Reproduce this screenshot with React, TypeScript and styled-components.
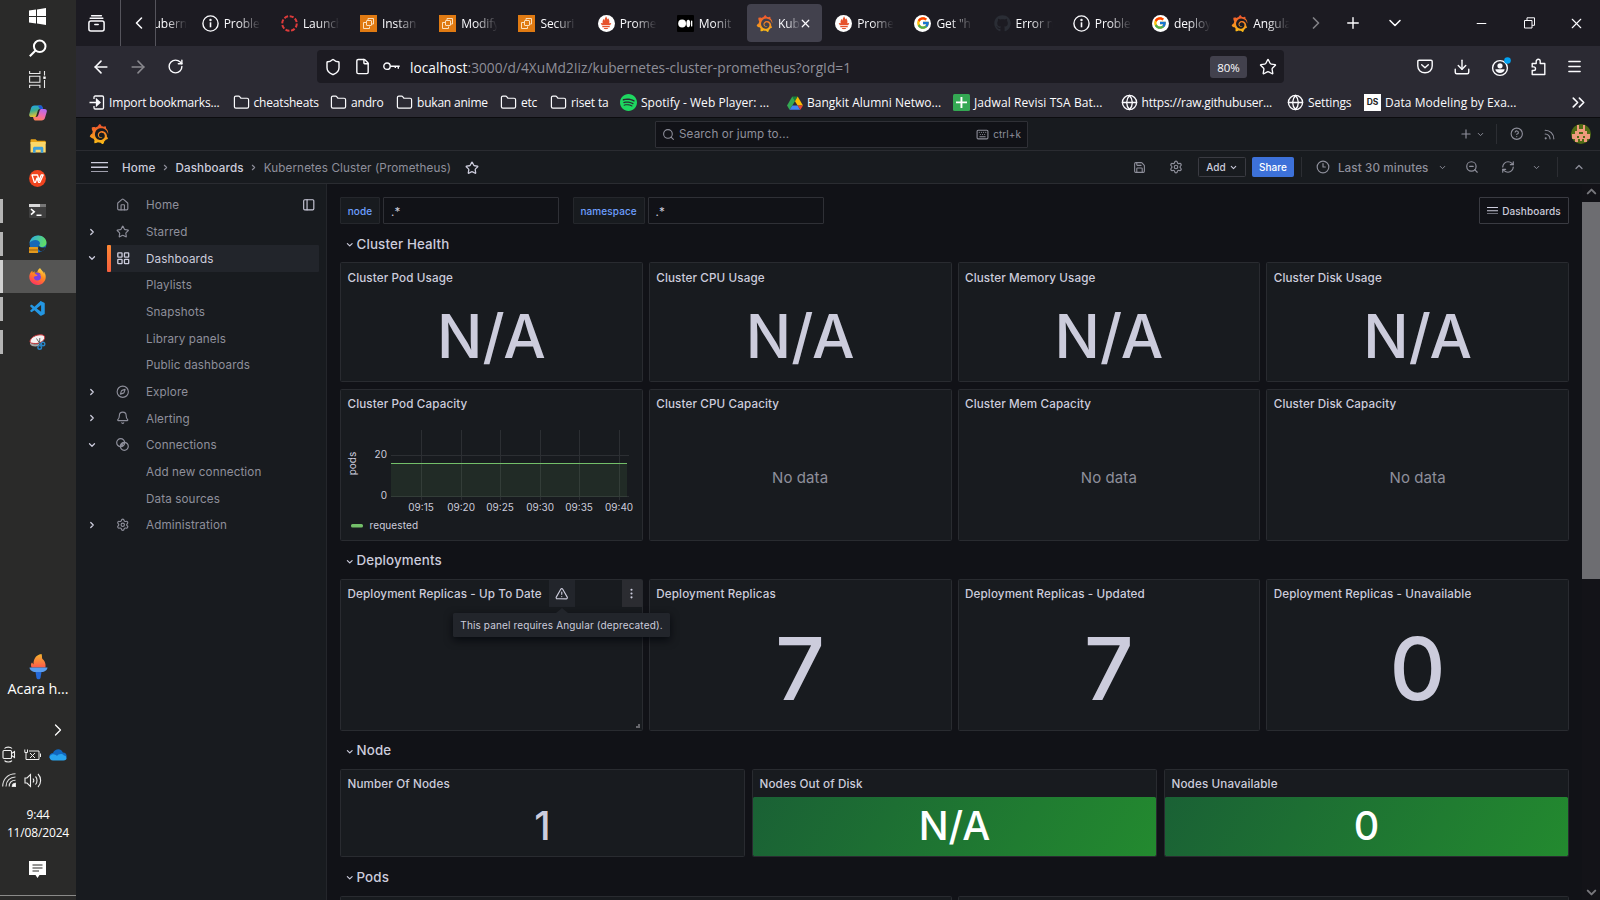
import React from "react";
import styled, { createGlobalStyle, css } from "styled-components";
import {
  ArrowLeft, ArrowRight, RotateCw, Shield, File, Star, Download, Menu, ChevronsRight, ChevronLeft, ChevronRight,
  ChevronDown, ChevronUp, Plus, X, Folder, Globe, Search, Keyboard, Save, Settings, CircleHelp, Rss, Clock3,
  ZoomOut, RefreshCw, House, PanelLeft, LayoutGrid, Compass, Bell, TriangleAlert, EllipsisVertical, Minus,
} from "lucide-react";
import { SiGrafana, SiSpotify, SiFirefoxbrowser } from "react-icons/si";
import { FcGoogle } from "react-icons/fc";
import { FaGithub } from "react-icons/fa";
import { VscVscode } from "react-icons/vsc";

const SEGOE = `"Open Sans", "Noto Sans", sans-serif`;
const INTER = `Inter, "Liberation Sans", sans-serif`;

const Global = createGlobalStyle`
  * { box-sizing: border-box; }
  html, body { margin: 0; padding: 0; background: #111217; overflow: hidden; }
  svg { display: block; flex: none; }
`;

const Screen = styled.div`
  display: flex;
  width: 1600px;
  height: 900px;
  overflow: hidden;
  font-family: ${INTER};
  color: #ccccdc;
`;

/* ---------- Windows taskbar ---------- */

const Taskbar = styled.aside`
  display: flex;
  flex-direction: column;
  flex: none;
  width: 76px;
  height: 900px;
  background: #2a2a29;
  color: #fff;
  font-family: ${SEGOE};
`;

const TaskItem = styled.div<{ $h?: number; $active?: boolean; $running?: boolean; $gap?: number }>`
  position: relative;
  display: flex;
  flex: none;
  align-items: center;
  justify-content: center;
  height: ${(p) => p.$h ?? 32.65}px;
  margin-top: ${(p) => p.$gap ?? 0}px;
  padding-right: 1px;
  background: ${(p) => (p.$active ? "#555554" : "transparent")};
  ${(p) =>
    p.$running &&
    css`
      &::before {
        content: "";
        position: absolute;
        left: 0;
        top: ${p.$active ? 0 : 4.5}px;
        bottom: ${p.$active ? 0 : 4.5}px;
        width: 3px;
        background: ${p.$active ? "#d0d0d0" : "#b4b4b4"};
      }
    `}
`;

const TaskSpacer = styled.div`
  flex: 1;
`;

const Weather = styled.div`
  display: flex;
  flex-direction: column;
  align-items: center;
  height: 62px;
  font-size: 14.4px;
  line-height: 17px;
  letter-spacing: -0.1px;
`;

const TrayChevron = styled.div`
  display: flex;
  justify-content: flex-end;
  height: 26px;
  padding-top: 4px;
  padding-right: 8px;
`;

const TrayRow = styled.div`
  display: flex;
  align-items: center;
  height: 25.5px;
  padding-left: 2px;
  gap: 8px;
`;

const ClockText = styled.div`
  display: flex;
  flex-direction: column;
  align-items: center;
  margin-top: 13px;
  font-size: 12px;
  line-height: 18.6px;
  letter-spacing: -0.15px;
`;

const Notification = styled.div`
  display: flex;
  justify-content: center;
  height: 52px;
  padding-top: 18px;
  padding-right: 1px;
`;

const DesktopPeek = styled.div`
  height: 5px;
  border-top: 1px solid #8a8a89;
`;

/* ---------- Browser chrome ---------- */

const Browser = styled.div`
  display: flex;
  flex-direction: column;
  flex: 1;
  min-width: 0;
  height: 900px;
`;

const TabBar = styled.header`
  display: flex;
  flex: none;
  height: 46px;
  background: #1c1b22;
  color: #fbfbfe;
  font-family: ${SEGOE};
  font-size: 12px;
`;

const Slot = styled.div<{ $w: number; $dim?: boolean; $line?: boolean }>`
  display: flex;
  flex: none;
  align-items: center;
  justify-content: center;
  width: ${(p) => p.$w}px;
  opacity: ${(p) => (p.$dim ? 0.45 : 1)};
  border-right: ${(p) => (p.$line ? "1px solid #55545c" : "0")};
`;

const TabStrip = styled.div`
  display: flex;
  flex: none;
  align-items: center;
  gap: 4.2px;
  width: 1144px;
  overflow: hidden;
`;

const Tab = styled.div<{ $active?: boolean }>`
  display: flex;
  flex: none;
  align-items: center;
  width: 75px;
  height: 37.5px;
  padding: 0 ${(p) => (p.$active ? 10 : 5)}px 0 9px;
  gap: 5px;
  border-radius: 4px;
  background: ${(p) => (p.$active ? "#42414d" : "transparent")};
  letter-spacing: -0.08px;
`;

const TabClose = styled.span`
  display: flex;
  flex: none;
  margin-left: -8px;
`;

const ClippedTab = styled.div`
  flex: none;
  width: 35px;
  margin-left: -2.5px;
`;

const TabLabel = styled.span`
  flex: 1;
  min-width: 0;
  overflow: hidden;
  white-space: nowrap;
  padding-top: 1px;
  line-height: 18px;
  mask-image: linear-gradient(90deg, #000 36%, transparent 94%);
`;

const WindowButtons = styled.div`
  display: flex;
  margin-left: auto;
`;

const NavBar = styled.div`
  display: flex;
  flex: none;
  align-items: center;
  height: 41px;
  padding: 0 0 0 7px;
  background: #2b2a33;
  color: #fbfbfe;
`;

const UrlBar = styled.div`
  display: flex;
  align-items: center;
  width: 967px;
  height: 33px;
  margin-left: 122px;
  padding: 0 7px 0 6px;
  border-radius: 4px;
  background: #1c1b22;
  font-family: ${SEGOE};
  font-size: 13.7px;
`;

const Url = styled.span`
  flex: 1;
  padding: 1.5px 0 0 9px;
  color: #8f8f99;
  letter-spacing: 0.02px;
  white-space: nowrap;
  b {
    font-weight: 400;
    color: #fbfbfe;
  }
`;

const Zoom = styled.span`
  width: 37px;
  height: 22px;
  margin-right: 12px;
  border-radius: 3px;
  background: #42414d;
  font-size: 11.5px;
  line-height: 23px;
  text-align: center;
  letter-spacing: -0.1px;
`;

const NavActions = styled.div`
  display: flex;
  align-items: center;
  margin-left: 122px;
`;

const Bookmarks = styled.div`
  display: flex;
  flex: none;
  align-items: center;
  height: 31px;
  padding-left: 13px;
  border-bottom: 1px solid #0c0c0f;
  background: #2b2a33;
  color: #fbfbfe;
  font-family: ${SEGOE};
  font-size: 12px;
`;

const Bookmark = styled.div<{ $w: number; $ls?: number }>`
  display: flex;
  flex: none;
  align-items: center;
  gap: 4px;
  width: ${(p) => p.$w}px;
  padding-top: 1px;
  letter-spacing: ${(p) => p.$ls ?? -0.14}px;
  white-space: nowrap;
`;

/* ---------- Grafana shell ---------- */

const TopBar = styled.div`
  display: flex;
  flex: none;
  align-items: center;
  height: 33px;
  padding-left: 13px;
  border-bottom: 1px solid #2a2c31;
  background: #181b1f;
  color: #8e8f9b;
`;

const SearchBox = styled.div`
  display: flex;
  align-items: center;
  width: 373px;
  height: 27px;
  margin-left: 546px;
  padding: 0 6px;
  border: 1px solid #2f3036;
  border-radius: 1px;
  background: #111217;
  font-size: 11.67px;
  letter-spacing: 0.12px;
`;

const SearchText = styled.span`
  flex: 1;
  padding: 0 0 0 4px;
`;

const SearchHint = styled.span`
  padding-left: 4px;
  font-size: 10px;
  letter-spacing: 0.05px;
`;

const BarEnd = styled.div`
  display: flex;
  align-items: center;
  margin-left: auto;
`;

const VRule = styled.i`
  width: 1px;
  height: 20px;
  background: #2c2e33;
`;

const SubBar = styled.div`
  display: flex;
  flex: none;
  align-items: center;
  height: 33px;
  padding-left: 14.5px;
  border-bottom: 1px solid #2a2c31;
  background: #181b1f;
  color: #8e8f9b;
  font-size: 11.67px;
`;

const Crumbs = styled.nav`
  display: flex;
  align-items: center;
  padding: 1px 0 0 14.5px;
  letter-spacing: 0.12px;
  white-space: nowrap;
`;

const Crumb = styled.span<{ $muted?: boolean }>`
  color: ${(p) => (p.$muted ? "#8e8f9b" : "#ccccdc")};
  font-weight: ${(p) => (p.$muted ? 400 : 500)};
`;

const TimeRange = styled.span`
  padding-top: 1px;
  font-weight: 500;
  letter-spacing: 0.12px;
  white-space: nowrap;
`;

const Button = styled.div<{ $primary?: boolean; $w: number }>`
  display: flex;
  align-items: center;
  justify-content: center;
  gap: 3px;
  width: ${(p) => p.$w}px;
  height: 20.5px;
  border: 1px solid ${(p) => (p.$primary ? "#3d71d9" : "#3a3b42")};
  border-radius: 1.5px;
  background: ${(p) => (p.$primary ? "#3d71d9" : "transparent")};
  color: ${(p) => (p.$primary ? "#fff" : "#ccccdc")};
  font-size: 10px;
  font-weight: 500;
`;

const Body = styled.div`
  display: flex;
  flex: 1;
  min-height: 0;
`;

const Sidebar = styled.nav`
  flex: none;
  width: 251px;
  padding-top: 7.6px;
  border-right: 1px solid #24262b;
  background: #181b1f;
`;

const NavItem = styled.div<{ $active?: boolean }>`
  display: flex;
  align-items: center;
  height: 26.67px;
  padding-right: 7px;
  color: ${(p) => (p.$active ? "#ccccdc" : "#8e8f9b")};
  font-size: 11.67px;
  letter-spacing: 0.12px;
`;

const Caret = styled.span`
  display: flex;
  width: 31px;
  padding-left: 11px;
  color: #ccccdc;
`;

const NavLink = styled.div<{ $active?: boolean }>`
  position: relative;
  display: flex;
  flex: 1;
  align-items: center;
  height: 100%;
  padding: 0 3.5px 0 8.6px;
  border-radius: 1px;
  background: ${(p) => (p.$active ? "#22252b" : "transparent")};
  ${(p) =>
    p.$active &&
    css`
      &::before {
        content: "";
        position: absolute;
        left: 0;
        top: 0;
        bottom: 0;
        width: 4px;
        border-radius: 1px;
        background: linear-gradient(#ff8833, #f55f3e);
      }
    `}
`;

const NavIcon = styled.span`
  display: flex;
  width: 30.4px;
`;

const NavText = styled.span`
  flex: 1;
  padding-top: 1px;
`;

const Main = styled.main`
  flex: 1;
  min-width: 0;
  padding: 13px 13px 0 13px;
  overflow: hidden;
  background: #111217;
`;

const Variables = styled.div`
  display: flex;
  height: 27px;
  font-size: 10px;
  letter-spacing: 0.1px;
`;

const VarLabel = styled.label<{ $w: number }>`
  width: ${(p) => p.$w}px;
  height: 27px;
  margin-right: 3px;
  border: 1px solid #25272c;
  border-radius: 1px;
  background: #181b1f;
  color: #6e9fff;
  font-weight: 500;
  line-height: 27px;
  text-align: center;
`;

const VarInput = styled.div`
  width: 176px;
  height: 27px;
  margin-right: 13.6px;
  padding-left: 7px;
  border: 1px solid #2f3036;
  border-radius: 1px;
  font-size: 11.67px;
  line-height: 28px;
`;

const DashboardsButton = styled.div`
  display: flex;
  align-items: center;
  justify-content: center;
  gap: 4px;
  width: 90px;
  height: 27px;
  margin-left: auto;
  border: 1px solid #3a3b42;
  border-radius: 1px;
  font-weight: 500;
`;

const RowTitle = styled.h2`
  display: flex;
  align-items: center;
  gap: 2px;
  height: 25px;
  margin: 6.67px 0;
  padding: 1px 0 0 5px;
  font-size: 13.33px;
  font-weight: 500;
  letter-spacing: 0.14px;
  svg {
    margin-top: 2px;
  }
`;

const PanelRow = styled.section<{ $cols: number; $h: number }>`
  display: grid;
  grid-template-columns: repeat(${(p) => p.$cols}, 1fr);
  column-gap: ${(p) => (p.$cols === 3 ? 7 : 6)}px;
  height: ${(p) => p.$h}px;
  margin-bottom: 6.67px;
`;

const PanelBox = styled.article`
  position: relative;
  display: flex;
  flex-direction: column;
  min-width: 0;
  border: 1px solid #292b30;
  border-radius: 1.5px;
  background: #181b1f;
`;

const PanelHead = styled.div`
  display: flex;
  flex: none;
  align-items: center;
  height: 26.67px;
  padding-left: 6.5px;
`;

const PanelTitle = styled.h3`
  margin: 0;
  padding-top: 2px;
  font-size: 11.67px;
  font-weight: 500;
  letter-spacing: 0.12px;
  white-space: nowrap;
`;

const Stat = styled.div<{ $size: number; $green?: boolean }>`
  display: flex;
  flex: 1;
  align-items: center;
  justify-content: center;
  padding-top: ${(p) => (p.$size < 50 ? 1.5 : 0)}px;
  border-radius: 1.5px;
  background: ${(p) => (p.$green ? "linear-gradient(120deg, #1a6135, #238a2f)" : "transparent")};
  color: ${(p) => (p.$green ? "#fff" : "#ccccdc")};
  font-size: ${(p) => p.$size}px;
  font-weight: 500;
  line-height: 1;
`;

const NoData = styled.div`
  display: flex;
  flex: 1;
  align-items: center;
  justify-content: center;
  padding-bottom: 0.5px;
  color: #8e8f9b;
  font-size: 15px;
  letter-spacing: 0.1px;
`;

const HeadButton = styled.div<{ $end?: boolean }>`
  display: flex;
  align-items: center;
  justify-content: center;
  width: ${(p) => (p.$end ? 20 : 26.5)}px;
  height: 26.67px;
  margin-left: ${(p) => (p.$end ? "auto" : "7px")};
  background: ${(p) => (p.$end ? "#2b2c31" : "#22252b")};
`;

const Tooltip = styled.div`
  position: absolute;
  z-index: 2;
  left: 112px;
  top: 33.4px;
  width: 217px;
  height: 24px;
  border-radius: 1.5px;
  background: #22252b;
  box-shadow: 0 3px 8px rgba(1, 4, 9, 0.75);
  font-size: 10px;
  letter-spacing: 0.14px;
  line-height: 25px;
  text-align: center;
  white-space: nowrap;
  &::before {
    content: "";
    position: absolute;
    left: 103px;
    top: -5px;
    border: 6px solid transparent;
    border-top: 0;
    border-bottom: 5px solid #22252b;
  }
`;

const ResizeGrip = styled.i`
  position: absolute;
  right: 2px;
  bottom: 2px;
  width: 4px;
  height: 4px;
  border-right: 2px solid #66676c;
  border-bottom: 2px solid #66676c;
`;

const Scrollbar = styled.div`
  display: flex;
  flex-direction: column;
  align-items: center;
  flex: none;
  width: 18px;
  background: #131318;
  color: #77777c;
`;

const Thumb = styled.div`
  width: 18px;
  height: 377px;
  margin: 3px 0 auto;
  background: #6d6d71;
`;

/* ---------- Drawings ---------- */

const GradientFill = styled.span<{ $id: string }>`
  display: flex;
  flex: none;
  path {
    fill: url(#${(p) => p.$id});
  }
`;

const GrafanaLogo = ({ size }: { size: number }) => (
  <GradientFill $id="grafana-gradient">
    <SiGrafana size={size} />
  </GradientFill>
);

const GradientDefs = styled.svg`
  position: absolute;
`;

const Gradients = () => (
  <GradientDefs width="0" height="0">
    <defs>
      <linearGradient id="grafana-gradient" x1="0" y1="0" x2="0" y2="1">
        <stop offset="0" stopColor="#ee4f2f" />
        <stop offset="1" stopColor="#fbbf16" />
      </linearGradient>
      <linearGradient id="firefox-gradient" x1="0.8" y1="0" x2="0.3" y2="1">
        <stop offset="0" stopColor="#ffe14a" />
        <stop offset="0.45" stopColor="#ff8a1e" />
        <stop offset="1" stopColor="#ff2f63" />
      </linearGradient>
    </defs>
  </GradientDefs>
);

const Bars = ({ w, h, sw = 1.3 }: { w: number; h: number; sw?: number }) => (
  <svg width={w} height={h} viewBox={`0 0 ${w} ${h}`} stroke="#ccccdc" strokeWidth={sw}>
    <path d={`M0 ${sw / 2}h${w}M0 ${h / 2}h${w}M0 ${h - sw / 2}h${w}`} />
  </svg>
);

const InfoIcon = () => (
  <svg width="17" height="17" viewBox="0 0 17 17" fill="none" stroke="#fbfbfe" strokeWidth="1.4">
    <circle cx="8.5" cy="8.5" r="7.6" />
    <path d="M8.5 7.3v5" strokeWidth="1.6" />
    <circle cx="8.5" cy="5" r="0.5" fill="#fbfbfe" />
  </svg>
);

const DashedRing = () => (
  <svg width="17" height="17" viewBox="0 0 17 17" fill="none" stroke="#dd3b3b" strokeWidth="2">
    <circle cx="8.5" cy="8.5" r="7.3" strokeDasharray="4.1 1.63" />
  </svg>
);

const Ec2Icon = () => (
  <svg width="17" height="17" viewBox="0 0 17 17" fill="none" stroke="#fbe0bd" strokeWidth="1">
    <rect width="17" height="17" fill="#e07a12" stroke="none" />
    <rect x="6.5" y="5.5" width="5" height="5" rx="0.5" />
    <path d="M6 7.5H3.5v6h6V11.5M8 5V3.5h5.500V9H12" />
  </svg>
);

const RoundBadge = styled.span`
  display: flex;
  flex: none;
  align-items: center;
  justify-content: center;
  width: 17px;
  height: 17px;
  border-radius: 50%;
  background: #fff;
`;

const PrometheusIcon = () => (
  <RoundBadge>
    <svg width="12" height="14" viewBox="0 0 12 14" fill="#e6522c">
      <path d="M6 0.3C6.8 1.8 7.3 2.2 7.2 3.6 7.9 3.1 8.1 2.6 8 2 9.5 4 9.8 5.6 9.2 7.3L11.3 7 10.2 9.3H1.8L0.7 7l2.1.3C2.2 5.6 2.7 4 3.8 2.7c0 1 .3 1.4.7 1.8C4.4 2.7 5.7 2 6 .3zM2.3 10h7.4v1.3H2.3zM3.7 12h4.6c-.6 1.6-4 1.6-4.600 0z" />
    </svg>
  </RoundBadge>
);

const MediumIcon = () => (
  <svg width="17" height="17" viewBox="0 0 17 17">
    <rect width="17" height="17" rx="1" fill="#000" />
    <circle cx="5.1" cy="8.5" r="3.9" fill="#fff" />
    <ellipse cx="11.3" cy="8.5" rx="1.9" ry="3.7" fill="#fff" />
    <rect x="14" y="5.4" width="1.3" height="6.2" rx="0.6" fill="#fff" />
  </svg>
);

const GoogleIcon = () => (
  <RoundBadge>
    <FcGoogle size={14} />
  </RoundBadge>
);

const DriveIcon = () => (
  <svg width="16" height="14" viewBox="0 0 16 14">
    <path d="M5.3 0.5h5.4L8 5.2z" fill="#188038" />
    <path d="M5.3 .5 0 9.6l2.6 4.2L8 5.2z" fill="#34a853" />
    <path d="M10.7.5 16 9.6h-5.4L8 5.2z" fill="#fbbc04" />
    <path d="M5.4 9.6h5.2l2.6 4.2H2.6z" fill="#4285f4" />
    <path d="M10.6 9.6H16l-2.6 4.2z" fill="#ea4335" />
  </svg>
);

const SheetsIcon = () => (
  <svg width="17" height="17" viewBox="0 0 17 17">
    <rect width="17" height="17" rx="1.5" fill="#34a853" />
    <path d="M7.5 3h1.9v4.6H14v1.7H9.4V14H7.5V9.3H3V7.6h4.5z" fill="#fff" />
  </svg>
);

const DsBadge = styled.span`
  width: 17px;
  height: 17px;
  background: #fff;
  color: #222;
  font: 700 8.5px/17px ${INTER};
  letter-spacing: 0;
  text-align: center;
`;

const ImportIcon = () => (
  <svg width="16" height="15" viewBox="0 0 16 15" fill="none" stroke="#fbfbfe" strokeWidth="1.3">
    <path d="M5 4V2.2C5 1.5 5.5 1 6.2 1h7.1c.7 0 1.2.5 1.2 1.2v10.6c0 .7-.5 1.2-1.2 1.2H6.2C5.5 14 5 13.5 5 12.8V11M.5 7.5h9" />
    <path d="M7.5 4.3 11 7.5l-3.5 3.2z" fill="#fbfbfe" />
  </svg>
);

const FirefoxViewIcon = () => (
  <svg width="17" height="17" viewBox="0 0 17 17" fill="none" stroke="#fbfbfe" strokeWidth="1.5" strokeLinecap="round">
    <path d="M3.6 .8h9.8M2.200 3.300h12.600" />
    <rect x="0.9" y="5.9" width="15.2" height="10.2" rx="2" />
    <path d="M6.8 9.6h3.4" />
  </svg>
);

const KeyIcon = () => (
  <svg width="17" height="9" viewBox="0 0 17 9" fill="none" stroke="#fbfbfe" strokeWidth="1.4">
    <circle cx="4" cy="4.2" r="3.2" />
    <path d="M7.2 4.2h9.5M15.3 4.2v2.5M12.3 4.2v1.8" />
  </svg>
);

const PocketIcon = () => (
  <svg width="16" height="15" viewBox="0 0 16 15" fill="none" stroke="#fbfbfe" strokeWidth="1.4" strokeLinecap="round" strokeLinejoin="round">
    <path d="M2 1.2h12c.7 0 1.2.5 1.2 1.2V7c0 4-3.2 6.8-7.2 6.8S.8 11 .8 7V2.4C.8 1.7 1.3 1.2 2 1.2z" />
    <path d="M4.7 5.7 8 8.8l3.3-3.1" />
  </svg>
);

const AccountIcon = () => (
  <svg width="20" height="20" viewBox="0 0 20 20">
    <circle cx="9" cy="11" r="7.4" fill="none" stroke="#fbfbfe" strokeWidth="1.4" />
    <circle cx="9" cy="8.8" r="2.6" fill="#fbfbfe" />
    <path d="M4.3 12.3h9.4c-.5 2.500-2.300 3.700-4.700 3.700s-4.200-1.200-4.700-3.700z" fill="#fbfbfe" />
    <circle cx="16.5" cy="3.5" r="3.3" fill="#00a2f3" />
  </svg>
);

const ExtensionIcon = () => (
  <svg width="16" height="18" viewBox="0 0 16 18" fill="none" stroke="#fbfbfe" strokeWidth="1.4" strokeLinejoin="round">
    <path d="M1.2 16.5v-4h1.5a1.8 1.8 0 0 0 0-3.6H1.2V5.5h4V3.3a2 2 0 0 1 4 0v2.2h4.6v11z" />
  </svg>
);

const RestoreIcon = () => (
  <svg width="11" height="12" viewBox="0 0 11 12" fill="none" stroke="#fbfbfe" strokeWidth="1">
    <path d="M.5 3.5h7.5v7.5H.5zM3 3.5V.8h7.5v7.5H8" />
  </svg>
);

const Avatar = () => (
  <svg width="20" height="20" viewBox="0 0 20 20">
    <defs>
      <clipPath id="avatar-clip">
        <circle cx="10" cy="10" r="10" />
      </clipPath>
    </defs>
    <g clipPath="url(#avatar-clip)">
      <rect width="20" height="20" fill="#4f6b14" />
      <path
        d="M6 1h2v4h4V1h2v6h2v3h3v5h-3v3h-3v-3h-2v2H9v-2H7v3H4v-3H1v-5h3V7h2zM8 8v2h4V8zM6 12v2h2v-2zM12 12v2h2v-2z"
        fill="#f09a7c"
        fillRule="evenodd"
      />
    </g>
  </svg>
);

const ConnectionsIcon = () => (
  <svg width="13" height="13" viewBox="0 0 13 13" fill="none" stroke="currentColor" strokeWidth="1.2">
    <circle cx="4.7" cy="4.7" r="4" />
    <circle cx="8.3" cy="8.3" r="4" />
    <path d="M4.5 8.2 8 4.5M5.2 6 7 7.9" />
  </svg>
);

const WindowsIcon = () => (
  <svg width="17" height="17" viewBox="0 0 17 17" fill="#fff">
    <path d="M0 2.6 7 1.6V8H0zM8 1.4 17 0v8H8zM0 9h7v6.4L0 14.4zM8 9h9v8l-9-1.4z" />
  </svg>
);

const TaskSearchIcon = () => (
  <svg width="18" height="18" viewBox="0 0 18 18" fill="none" stroke="#fff" strokeWidth="2">
    <circle cx="10.7" cy="7.3" r="5.8" />
    <path d="M6.5 11.5.8 17.2" />
  </svg>
);

const TaskViewIcon = () => (
  <svg width="17" height="17" viewBox="0 0 17 17" fill="none" stroke="#e8e8e8" strokeWidth="1.1">
    <path d="M.6 0v2.5h10.3V0M.6 17v-2.8h10.3V17M.6 5.2h10.3v6H.6zM15.5 0v4.5M15.5 9v8" />
    <rect x="14.3" y="5.5" width="2.4" height="2.4" fill="#fff" stroke="none" />
  </svg>
);

const CopilotIcon = () => (
  <svg width="18" height="16" viewBox="0 0 18 16">
    <defs>
      <linearGradient id="copilot-a" x1="0" y1="0" x2="0.3" y2="1">
        <stop offset="0" stopColor="#1aa5f5" />
        <stop offset="0.5" stopColor="#3fae8e" />
        <stop offset="1" stopColor="#f0c32c" />
      </linearGradient>
      <linearGradient id="copilot-b" x1="0.7" y1="0" x2="0.3" y2="1">
        <stop offset="0" stopColor="#b46bf0" />
        <stop offset="0.5" stopColor="#ef6bb0" />
        <stop offset="1" stopColor="#ff8457" />
      </linearGradient>
    </defs>
    <path d="M5.5.5h6c1 0 1.6.6 1.9 1.5l.6 2H11c-1.3 0-1.9.7-2.3 1.9L7.3 10.5C7 11.5 6.4 12 5.4 12H2.5C.6 12-.2 10.8.3 9l1.7-5.8C2.5 1.5 3.6.5 5.5.5z" fill="url(#copilot-a)" />
    <path d="M9 .5h2.5c1 0 1.6.6 1.9 1.5l.6 2h-3.2z" fill="#1d56d8" />
    <path d="M12.6 4h2.9c1.9 0 2.7 1.2 2.2 3L16 12.8c-.5 1.7-1.6 2.7-3.5 2.7h-6c-1 0-1.6-.6-1.9-1.5L4 12h3c1.3 0 1.9-.7 2.3-1.9l1.4-4.6C11 4.5 11.6 4 12.6 4z" fill="url(#copilot-b)" />
  </svg>
);

const ExplorerIcon = () => (
  <svg width="16" height="14" viewBox="0 0 16 14">
    <path d="M.5 1.5C.5.8 1 .3 1.6.3h4l1.5 1.5h7.8c.5 0 .8.3.8.8V5H.5z" fill="#e8a317" />
    <path d="M.5 3h15.2v10.5H.5z" fill="#fbd769" />
    <path d="M3 13.7V9.3c0-1 .8-1.6 1.7-1.6h6.9c1 0 1.7.7 1.7 1.6v4.4h-2.6v-3H5.6v3z" fill="#3d9fdc" />
  </svg>
);

const WpsIcon = () => (
  <svg width="17" height="17" viewBox="0 0 17 17">
    <circle cx="8.5" cy="8.5" r="8.4" fill="#f0441f" />
    <path d="M3 5h5.5l1.8 5.3L12.2 5h2l-3.3 7.3H9.6L8 8l-1.5 4.3H5.3z" fill="none" stroke="#fff" strokeWidth="1.3" strokeLinejoin="round" />
  </svg>
);

const TerminalIcon = () => (
  <svg width="17" height="14" viewBox="0 0 17 14">
    <rect width="17" height="14" rx="1" fill="#3f3f3f" />
    <path d="M0 0h11v3H0z" fill="#d8d8d8" />
    <path d="M11 0h6v3h-6z" fill="#777" />
    <path d="m2 5 3.2 2.8L2 10.6M7.5 11.3h5" fill="none" stroke="#fff" strokeWidth="1.6" />
  </svg>
);

const EdgeIcon = () => (
  <svg width="18" height="18" viewBox="0 0 18 18">
    <defs>
      <linearGradient id="edge-a" x1="0" y1="0" x2="1" y2="0.3">
        <stop offset="0" stopColor="#2aa9e8" />
        <stop offset="1" stopColor="#5fdc6a" />
      </linearGradient>
    </defs>
    <circle cx="9" cy="9" r="8.5" fill="#1668b8" />
    <path d="M.5 8C1.2 3.5 4.7.5 9.2.5c4.8 0 8.3 3.4 8.3 7.3 0 2.6-1.9 4.2-4.3 4.2-1.6 0-3-.6-3-1.5 0-.7.8-1 .8-2.3C11 6.5 9 5 6.5 5 3.8 5 1.5 6.4.5 8z" fill="url(#edge-a)" />
    <path d="M9.8 10.5c.4 2 3.7 3 7 1.5-1 2.3-3 4-5 4.5L9 14z" fill="#2a2a29" />
    <rect x="0" y="12" width="9" height="6" rx="0.5" fill="#e39a1f" />
    <path d="M0 15h9" stroke="#9a5f0c" />
  </svg>
);

const FirefoxIcon = () => (
  <svg width="17" height="17" viewBox="0 0 24 24">
    <circle cx="11.5" cy="13" r="6.5" fill="#7a3fe0" />
    <GradientFill as="g" $id="firefox-gradient">
      <SiFirefoxbrowser size={24} />
    </GradientFill>
  </svg>
);

const SnipIcon = () => (
  <svg width="17" height="16" viewBox="0 0 17 16">
    <path d="M1 8c2 2.5 6 3 9.500 1.500l-1 2.500c-3 1-7.500.5-8.500-2z" fill="#a9a5a5" />
    <path d="M1 8C1 3.500 7 .6 12 .8c3 .1 4.200 1.500 3.500 3.700-1 3-5 5-9 5C3.500 9.500 1.200 9 1 8z" fill="#f6f2f2" stroke="#c9373c" strokeWidth="1" />
    <path d="M7.500 4.500 11 9.800M10.8 4 10.500 9.800" stroke="#555" strokeWidth="0.9" />
    <circle cx="14" cy="10" r="1.8" fill="none" stroke="#2a86c8" strokeWidth="1.4" />
    <circle cx="10.7" cy="13.4" r="1.8" fill="none" stroke="#2a86c8" strokeWidth="1.4" />
    <path d="m10 9.500 2.500 1.200-1 1.500" fill="none" stroke="#2a86c8" strokeWidth="1.4" />
  </svg>
);

const TorchIcon = () => (
  <svg width="19" height="26" viewBox="0 0 19 26">
    <defs>
      <linearGradient id="torch-flame" x1="0.5" y1="0" x2="0.5" y2="1">
        <stop offset="0" stopColor="#f7b42c" />
        <stop offset="1" stopColor="#fb5a4b" />
      </linearGradient>
    </defs>
    <path d="M12.5 0c1 3 0 4 1.5 5.5s3 3.5 2.5 8H2.5C1.5 11 2 9.5 3 8.5l1.5 2C4.5 6 6 1 12.5 0z" fill="url(#torch-flame)" />
    <path d="M.5 13.5h18c0 2.5-2 3.5-4.5 4.5H5C2.5 17 .5 16 .5 13.5z" fill="#5a9df0" />
    <path d="M6.5 18h6l-1 6c-.5 1.7-3.5 1.7-4 0z" fill="#2468d8" />
  </svg>
);

const MeetIcon = () => (
  <svg width="14" height="17" viewBox="0 0 14 17" fill="none" stroke="#eee" strokeWidth="1.1">
    <rect x="1" y="4.5" width="8.5" height="8" rx="1" />
    <path d="m9.5 7.5 3-2v6l-3-2M2.5 2.5C4 .6 8.5.6 10 2.5M2.5 14.7c1.5 1.8 6 1.8 7.5 0" />
  </svg>
);

const BatteryIcon = () => (
  <svg width="17" height="12" viewBox="0 0 17 12" fill="none" stroke="#eee" strokeWidth="1">
    <path d="M5 2h10v8.5H2V7M16.5 4.5v3.5M6 4l5 5M11 4 6 9M.8.5v3h2.7v-3M2 3.5V7" />
  </svg>
);

const OneDriveIcon = () => (
  <svg width="18" height="12" viewBox="0 0 18 12">
    <path d="M4 4C6-.5 12-1 13.8 3.5 17 3.5 18 6 17.5 8L9 8 0.5 9C-.5 6 2 4 4 4z" fill="#1068c0" />
    <path d="M4 11.5C0 11.5-.5 6.5 3 5.5c2-.5 4 .5 5 1.500 1-2 5-3 7-.5 3 0 4 5-.5 5z" fill="#28a4ee" />
  </svg>
);

const WifiIcon = () => (
  <svg width="14" height="14" viewBox="0 0 14 14" fill="none" stroke="#ddd" strokeWidth="1.1">
    <path d="M.7 13.5C.7 6 6 .7 13.5.7M4 13.5C4 8 8 4 13.5 4M7.2 13.5c0-4 2.6-6.3 6.3-6.3" />
    <path d="M10.3 13.5c0-2 1.2-3.2 3.2-3.2v3.2z" fill="#fff" />
  </svg>
);

const VolumeIcon = () => (
  <svg width="18" height="15" viewBox="0 0 18 15" fill="none" stroke="#eee" strokeWidth="1.1">
    <path d="M1 5h2l3.5-3.5v12L3 10H1zM9 5.5c.8 1 .8 3 0 4M11.5 3.5c2 2 2 6 0 8M14 1c3.5 3.5 3.5 9.5 0 13" />
  </svg>
);

const NoteIcon = () => (
  <svg width="17" height="17" viewBox="0 0 17 17">
    <path d="M0 0h17v14h-6.5l-2 3-2-3H0z" fill="#fff" />
    <path d="M3.5 4h10M3.5 7h10M3.5 10h6.5" stroke="#2a2a29" strokeWidth="1.1" />
  </svg>
);

const HOURS = [
  { x: 80.5, label: "09:15" },
  { x: 120.5, label: "09:20" },
  { x: 159.5, label: "09:25" },
  { x: 199.5, label: "09:30" },
  { x: 238.5, label: "09:35" },
  { x: 278.5, label: "09:40" },
];

const ChartText = styled.text`
  fill: #ccccdc;
  font-family: ${INTER};
  font-size: 10px;
`;

const PodChart = () => (
  <svg width="300" height="123" viewBox="0 0 300 123">
    {HOURS.map((h) => (
      <g key={h.label}>
        <path d={`M${h.x} 13v70`} stroke="#2c2f33" />
        <ChartText x={h.x - 0.4} y="94.4" textAnchor="middle">
          {h.label}
        </ChartText>
      </g>
    ))}
    <path d="M50 38.5h238M50 79.5h238" stroke="#2c2f33" />
    <rect x="50" y="47" width="236" height="33" fill="#73bf69" fillOpacity="0.1" />
    <path d="M50 46.5h236" stroke="#73bf69" strokeWidth="1" />
    <ChartText x="46" y="41.3" textAnchor="end">20</ChartText>
    <ChartText x="46" y="81.6" textAnchor="end">0</ChartText>
    <ChartText transform="translate(14.7 46.5) rotate(-90)" textAnchor="middle">pods</ChartText>
    <rect x="10" y="107" width="12" height="3.4" rx="1.5" fill="#73bf69" />
    <ChartText x="28.5" y="112.4" letterSpacing="0.1">requested</ChartText>
  </svg>
);

/* ---------- Content ---------- */

const TABS: { label: string; icon: React.ReactNode; active?: boolean }[] = [
  { label: "Proble", icon: <InfoIcon /> },
  { label: "Launch", icon: <DashedRing /> },
  { label: "Instan", icon: <Ec2Icon /> },
  { label: "Modify", icon: <Ec2Icon /> },
  { label: "Securi", icon: <Ec2Icon /> },
  { label: "Prome", icon: <PrometheusIcon /> },
  { label: "Monit", icon: <MediumIcon /> },
  { label: "Kub", icon: <GrafanaLogo size={17} />, active: true },
  { label: "Prome", icon: <PrometheusIcon /> },
  { label: 'Get "h', icon: <GoogleIcon /> },
  { label: "Error n", icon: <FaGithub size={17} color="#2a2d35" /> },
  { label: "Proble", icon: <InfoIcon /> },
  { label: "deploy", icon: <GoogleIcon /> },
  { label: "Angula", icon: <GrafanaLogo size={17} /> },
];

const folder = <Folder size={17} strokeWidth={1.7} />;
const globe = <Globe size={17} strokeWidth={1.9} />;

const BOOKMARKS: { label: string; icon: React.ReactNode; w: number; ls?: number }[] = [
  { label: "Import bookmarks...", icon: <ImportIcon />, w: 143.5, ls: -0.16 },
  { label: "cheatsheats", icon: folder, w: 97.5, ls: -0.18 },
  { label: "andro", icon: folder, w: 66, ls: -0.2 },
  { label: "bukan anime", icon: folder, w: 104, ls: -0.2 },
  { label: "etc", icon: folder, w: 50, ls: -0.2 },
  { label: "riset ta", icon: folder, w: 70 },
  { label: "Spotify - Web Player: ...", icon: <SiSpotify size={17} color="#1ed760" />, w: 167, ls: 0.04 },
  { label: "Bangkit Alumni Netwo...", icon: <DriveIcon />, w: 166, ls: 0.02 },
  { label: "Jadwal Revisi TSA Bat...", icon: <SheetsIcon />, w: 167.5, ls: 0.09 },
  { label: "https://raw.githubuser...", icon: globe, w: 166.5, ls: -0.18 },
  { label: "Settings", icon: globe, w: 77 },
  { label: "Data Modeling by Exa...", icon: <DsBadge>DS</DsBadge>, w: 204, ls: 0.06 },
];

const NAV: { label: string; icon?: React.ReactNode; caret?: "open" | "closed"; active?: boolean }[] = [
  { label: "Home", icon: <House size={13.5} strokeWidth={2} /> },
  { label: "Starred", icon: <Star size={13.5} strokeWidth={2} />, caret: "closed" },
  { label: "Dashboards", icon: <LayoutGrid size={14.5} strokeWidth={2.2} />, caret: "open", active: true },
  { label: "Playlists" },
  { label: "Snapshots" },
  { label: "Library panels" },
  { label: "Public dashboards" },
  { label: "Explore", icon: <Compass size={13.5} strokeWidth={2} />, caret: "closed" },
  { label: "Alerting", icon: <Bell size={13.5} strokeWidth={2} />, caret: "closed" },
  { label: "Connections", icon: <ConnectionsIcon />, caret: "open" },
  { label: "Add new connection" },
  { label: "Data sources" },
  { label: "Administration", icon: <Settings size={13.5} strokeWidth={2} />, caret: "closed" },
];

const Panel = ({ title, children, head }: { title: string; children?: React.ReactNode; head?: React.ReactNode }) => (
  <PanelBox>
    <PanelHead>
      <PanelTitle>{title}</PanelTitle>
      {head}
    </PanelHead>
    {children}
  </PanelBox>
);

const Row = ({ children }: { children: React.ReactNode }) => (
  <RowTitle>
    <ChevronDown size={9.5} strokeWidth={3} />
    {children}
  </RowTitle>
);

export default function App() {
  return (
    <Screen>
      <Global />
      <Gradients />
      <Taskbar>
        <TaskItem $h={32}><WindowsIcon /></TaskItem>
        <TaskItem $h={31}><TaskSearchIcon /></TaskItem>
        <TaskItem $h={32}><TaskViewIcon /></TaskItem>
        <TaskItem $gap={2}><CopilotIcon /></TaskItem>
        <TaskItem><ExplorerIcon /></TaskItem>
        <TaskItem><WpsIcon /></TaskItem>
        <TaskItem $running><TerminalIcon /></TaskItem>
        <TaskItem $running><EdgeIcon /></TaskItem>
        <TaskItem $running $active><FirefoxIcon /></TaskItem>
        <TaskItem $running><VscVscode size={18} color="#2497e3" /></TaskItem>
        <TaskItem $running><SnipIcon /></TaskItem>
        <TaskSpacer />
        <Weather>
          <TorchIcon />
          Acara h...
        </Weather>
        <TrayChevron><ChevronRight size={20} strokeWidth={1.5} /></TrayChevron>
        <TrayRow><MeetIcon /><BatteryIcon /><OneDriveIcon /></TrayRow>
        <TrayRow><WifiIcon /><VolumeIcon /></TrayRow>
        <ClockText>
          <span>9:44</span>
          <span>11/08/2024</span>
        </ClockText>
        <Notification><NoteIcon /></Notification>
        <DesktopPeek />
      </Taskbar>

      <Browser>
        <TabBar>
          <Slot $w={41}><FirefoxViewIcon /></Slot>
          <Slot $w={4} $line />
          <Slot $w={2} />
          <Slot $w={33} $line><ChevronLeft size={20} strokeWidth={1.9} /></Slot>
          <TabStrip>
            <ClippedTab><TabLabel as="div">ubern</TabLabel></ClippedTab>
            {TABS.map((t, i) => (
              <Tab key={i} $active={t.active}>
                {t.icon}
                <TabLabel>{t.label}</TabLabel>
                {t.active && <TabClose><X size={13} strokeWidth={2.3} /></TabClose>}
              </Tab>
            ))}
          </TabStrip>
          <Slot $w={32} $dim><ChevronRight size={20} strokeWidth={2} /></Slot>
          <Slot $w={42}><Plus size={18} strokeWidth={1.9} /></Slot>
          <Slot $w={42}><ChevronDown size={20} strokeWidth={1.9} /></Slot>
          <WindowButtons>
            <Slot $w={49}><Minus size={15} strokeWidth={1.6} /></Slot>
            <Slot $w={47}><RestoreIcon /></Slot>
            <Slot $w={47}><X size={17} strokeWidth={1.6} /></Slot>
          </WindowButtons>
        </TabBar>

        <NavBar>
          <Slot $w={36}><ArrowLeft size={20} strokeWidth={1.9} /></Slot>
          <Slot $w={37} $dim><ArrowRight size={20} strokeWidth={1.9} /></Slot>
          <Slot $w={38}><RotateCw size={17} strokeWidth={2} /></Slot>
          <Slot $w={1} />
          <UrlBar>
            <Slot $w={20}><Shield size={18} strokeWidth={1.9} /></Slot>
            <Slot $w={38}><File size={17} strokeWidth={2} /></Slot>
            <Slot $w={20}><KeyIcon /></Slot>
            <Url><b>localhost</b>:3000/d/4XuMd2Iiz/kubernetes-cluster-prometheus?orgId=1</Url>
            <Zoom>80%</Zoom>
            <Star size={18} strokeWidth={1.8} />
          </UrlBar>
          <NavActions>
            <Slot $w={38}><PocketIcon /></Slot>
            <Slot $w={36}><Download size={18} strokeWidth={1.9} /></Slot>
            <Slot $w={41}><AccountIcon /></Slot>
            <Slot $w={35}><ExtensionIcon /></Slot>
            <Slot $w={37}><Menu size={17} strokeWidth={1.9} /></Slot>
          </NavActions>
        </NavBar>

        <Bookmarks>
          {BOOKMARKS.map((b) => (
            <Bookmark key={b.label} $w={b.w} $ls={b.ls}>
              {b.icon}
              {b.label}
            </Bookmark>
          ))}
          <ChevronsRight size={21} strokeWidth={1.8} />
        </Bookmarks>

        <TopBar>
          <GrafanaLogo size={20} />
          <SearchBox>
            <Search size={13} strokeWidth={2} />
            <SearchText>Search or jump to...</SearchText>
            <Keyboard size={13} strokeWidth={2} />
            <SearchHint>ctrl+k</SearchHint>
          </SearchBox>
          <BarEnd>
            <Slot $w={14}><Plus size={14} strokeWidth={2} /></Slot>
            <Slot $w={14}><ChevronDown size={9} strokeWidth={2.5} /></Slot>
            <Slot $w={9} />
            <VRule />
            <Slot $w={39}><CircleHelp size={13.5} strokeWidth={2} /></Slot>
            <Slot $w={26}><Rss size={13} strokeWidth={2} /></Slot>
            <Slot $w={38}><Avatar /></Slot>
          </BarEnd>
        </TopBar>

        <SubBar>
          <Bars w={17} h={10.5} />
          <Crumbs>
            <Crumb>Home</Crumb>
            <Slot $w={20}><ChevronRight size={9} strokeWidth={3} /></Slot>
            <Crumb>Dashboards</Crumb>
            <Slot $w={20}><ChevronRight size={9} strokeWidth={3} /></Slot>
            <Crumb $muted>Kubernetes Cluster (Prometheus)</Crumb>
            <Slot $w={42}><Star size={14} strokeWidth={2.2} color="#ccccdc" /></Slot>
          </Crumbs>
          <BarEnd>
            <Slot $w={30}><Save size={13} strokeWidth={2} /></Slot>
            <Slot $w={43}><Settings size={14} strokeWidth={2} /></Slot>
            <Button $w={48}>Add <ChevronDown size={9} strokeWidth={2.8} /></Button>
            <Slot $w={6} />
            <Button $w={42} $primary>Share</Button>
            <Slot $w={7} />
            <VRule />
            <Slot $w={7} />
            <Slot $w={29}><Clock3 size={14} strokeWidth={2} /></Slot>
            <TimeRange>Last 30 minutes</TimeRange>
            <Slot $w={28.5}><ChevronDown size={9} strokeWidth={2.5} /></Slot>
            <Slot $w={29}><ZoomOut size={14} strokeWidth={2} /></Slot>
            <Slot $w={44}><RefreshCw size={14} strokeWidth={2} /></Slot>
            <Slot $w={13}><ChevronDown size={9} strokeWidth={2.5} /></Slot>
            <Slot $w={14} />
            <VRule />
            <Slot $w={42}><ChevronUp size={12} strokeWidth={2.5} /></Slot>
          </BarEnd>
        </SubBar>

        <Body>
          <Sidebar>
            {NAV.map((n) => (
              <NavItem key={n.label} $active={n.active}>
                <Caret>
                  {n.caret === "open" && <ChevronDown size={10} strokeWidth={3} />}
                  {n.caret === "closed" && <ChevronRight size={10} strokeWidth={3} />}
                </Caret>
                <NavLink $active={n.active}>
                  <NavIcon>{n.icon}</NavIcon>
                  <NavText>{n.label}</NavText>
                  {n.label === "Home" && <PanelLeft size={13.5} strokeWidth={2} color="#ccccdc" />}
                </NavLink>
              </NavItem>
            ))}
          </Sidebar>

          <Main>
            <Variables>
              <VarLabel $w={40}>node</VarLabel>
              <VarInput>.*</VarInput>
              <VarLabel $w={72}>namespace</VarLabel>
              <VarInput>.*</VarInput>
              <DashboardsButton>
                <Bars w={11} h={7.5} sw={1.1} />
                Dashboards
              </DashboardsButton>
            </Variables>

            <Row>Cluster Health</Row>
            <PanelRow $cols={4} $h={120}>
              {["Cluster Pod Usage", "Cluster CPU Usage", "Cluster Memory Usage", "Cluster Disk Usage"].map((t) => (
                <Panel key={t} title={t}>
                  <Stat $size={60}>N/A</Stat>
                </Panel>
              ))}
            </PanelRow>
            <PanelRow $cols={4} $h={151.67}>
              <Panel title="Cluster Pod Capacity"><PodChart /></Panel>
              {["Cluster CPU Capacity", "Cluster Mem Capacity", "Cluster Disk Capacity"].map((t) => (
                <Panel key={t} title={t}>
                  <NoData>No data</NoData>
                </Panel>
              ))}
            </PanelRow>

            <Row>Deployments</Row>
            <PanelRow $cols={4} $h={151.67}>
              <Panel
                title="Deployment Replicas - Up To Date"
                head={
                  <>
                    <HeadButton><TriangleAlert size={13.5} strokeWidth={2} /></HeadButton>
                    <HeadButton $end><EllipsisVertical size={13} strokeWidth={2} /></HeadButton>
                  </>
                }
              >
                <Tooltip>This panel requires Angular (deprecated).</Tooltip>
                <ResizeGrip />
              </Panel>
              <Panel title="Deployment Replicas"><Stat $size={87}>7</Stat></Panel>
              <Panel title="Deployment Replicas - Updated"><Stat $size={87}>7</Stat></Panel>
              <Panel title="Deployment Replicas - Unavailable"><Stat $size={87}>0</Stat></Panel>
            </PanelRow>

            <Row>Node</Row>
            <PanelRow $cols={3} $h={88.33}>
              <Panel title="Number Of Nodes"><Stat $size={39.5}>1</Stat></Panel>
              <Panel title="Nodes Out of Disk"><Stat $size={39.5} $green>N/A</Stat></Panel>
              <Panel title="Nodes Unavailable"><Stat $size={39.5} $green>0</Stat></Panel>
            </PanelRow>

            <Row>Pods</Row>
            <PanelRow $cols={2} $h={120}>
              <PanelBox />
              <PanelBox />
            </PanelRow>
          </Main>

          <Scrollbar>
            <ChevronUp size={15} strokeWidth={3.2} />
            <Thumb />
            <ChevronDown size={15} strokeWidth={3.2} />
          </Scrollbar>
        </Body>
      </Browser>
    </Screen>
  );
}
